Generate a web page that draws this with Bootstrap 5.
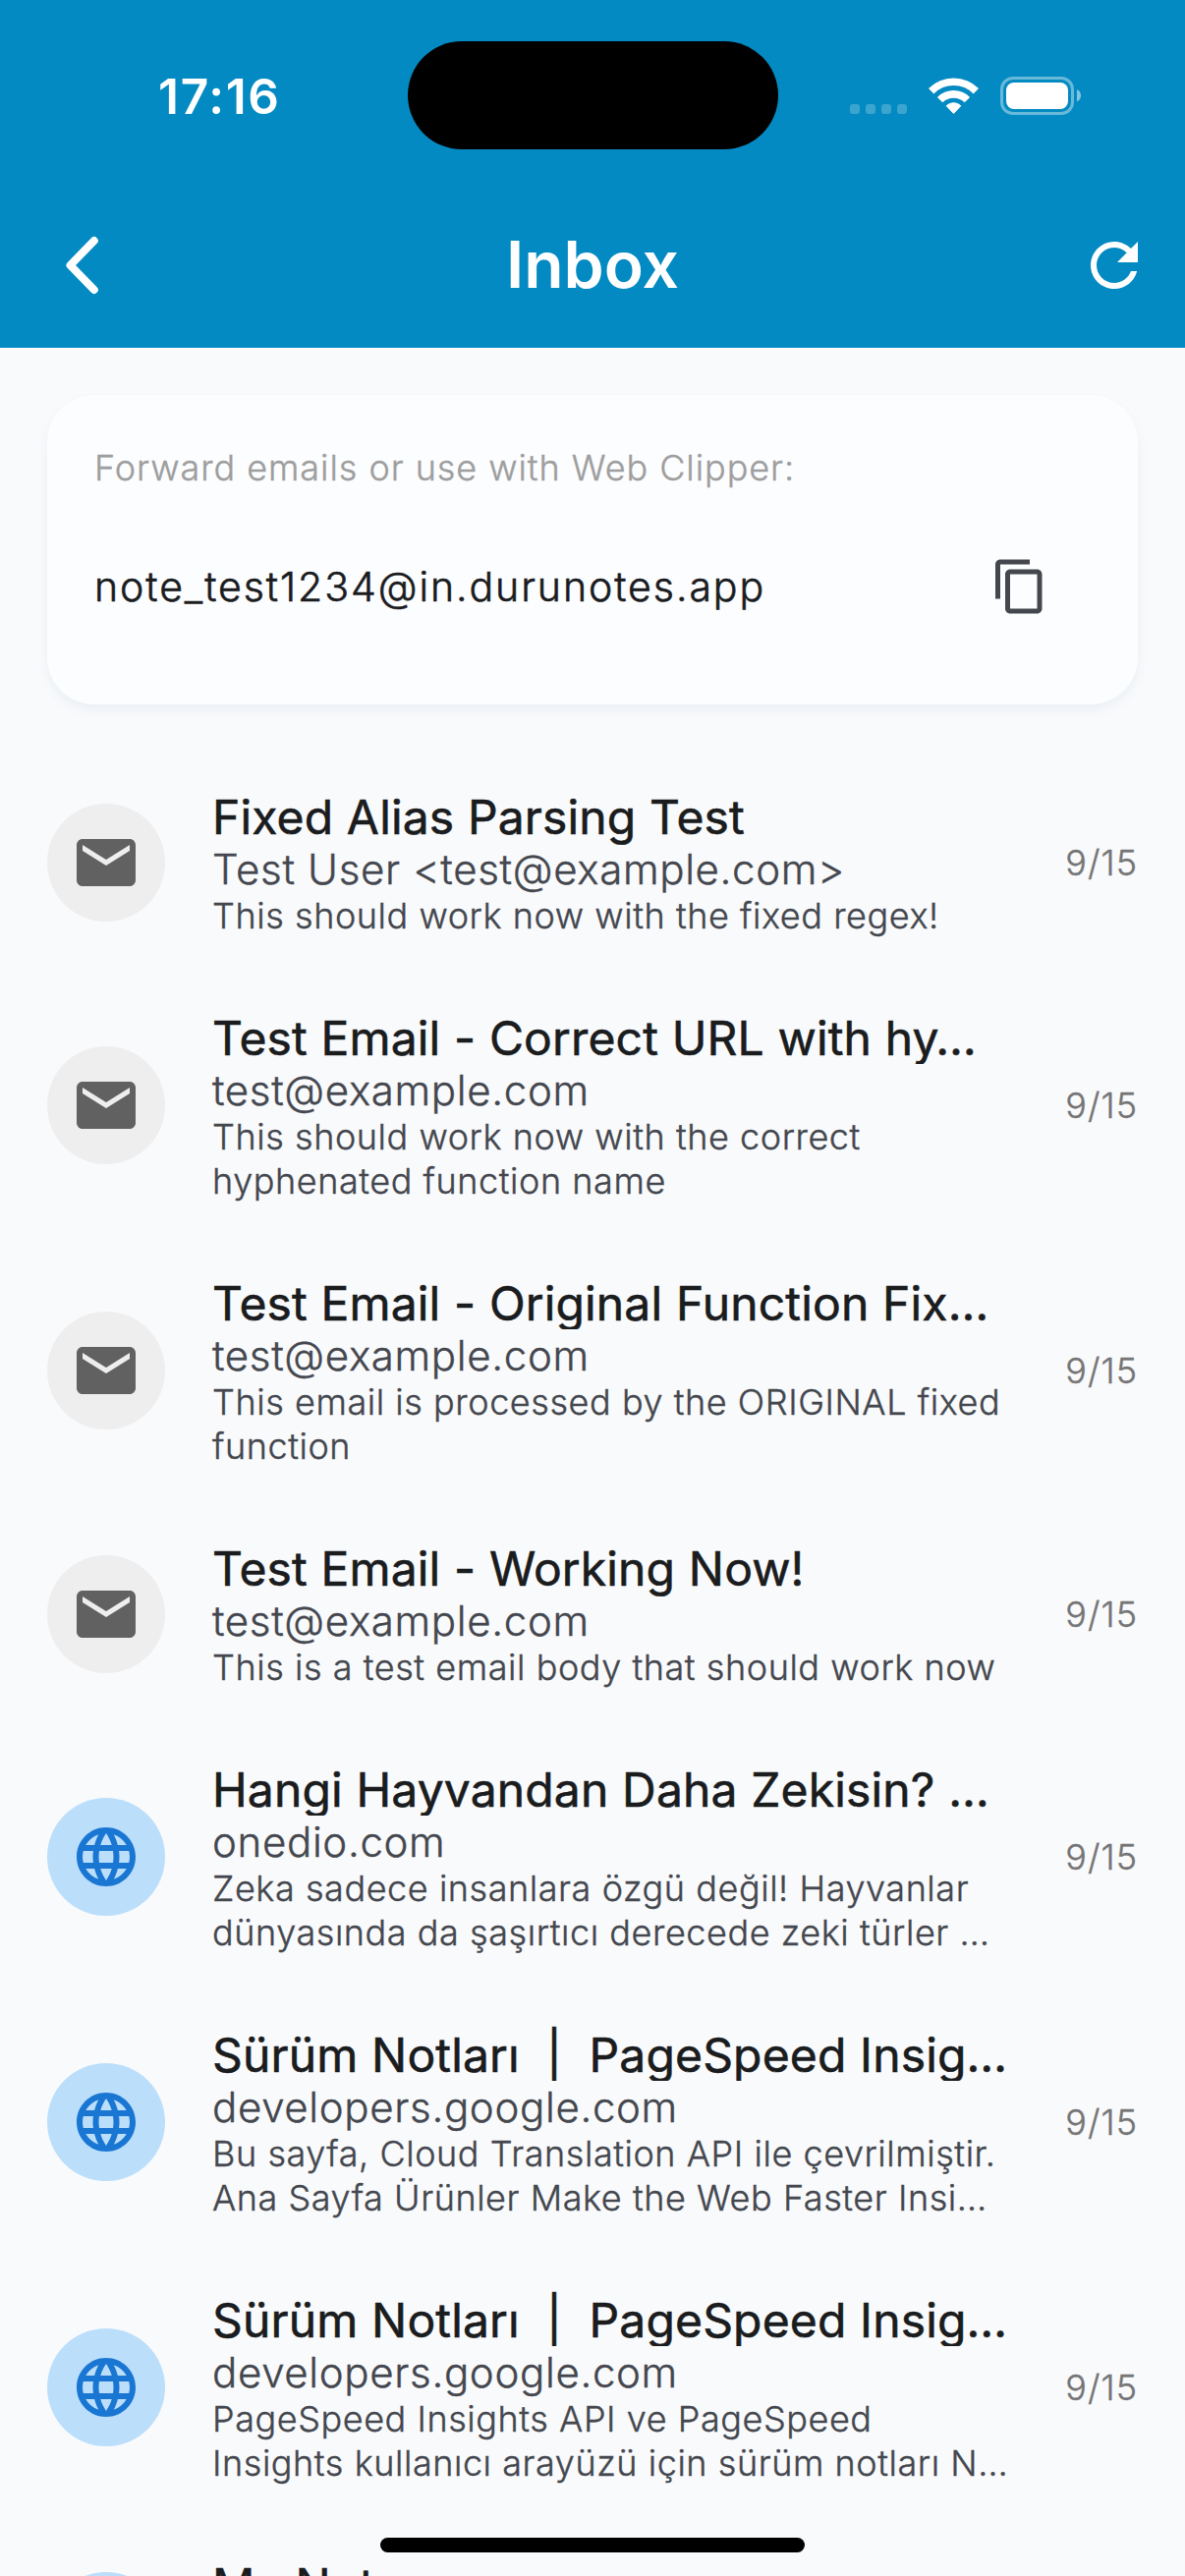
<!DOCTYPE html>
<html lang="tr">
<head>
<meta charset="utf-8">
<meta name="viewport" content="width=device-width, initial-scale=1">
<title>Inbox</title>
<link href="https://cdn.jsdelivr.net/npm/bootstrap@5.3.0/dist/css/bootstrap.min.css" rel="stylesheet">
<style>
  html, body { height: 2622px; overflow: hidden; }
  body { width: 1206px; background: #f9fafc; font-family: Inter, "Liberation Sans", sans-serif; color: #1a1c1e; position: relative; }
  .app-top { height: 354px; background: #048ac2; }
  .status-row { height: 192px; padding: 42px 105px 0 161px; }
  .clock { font-size: 49.5px; line-height: 60px; font-weight: 600; width: 254px; padding-top: 26px; letter-spacing: 1.7px; }
  .island { width: 377px; height: 110px; border-radius: 55px; background: #000; }
  .status-icons { margin-left: 73px; padding-top: 36px; }
  .title-row { height: 156px; padding: 0 36px 0 47px; }
  .app-title { font-size: 66px; font-weight: 600; line-height: 80px; margin: 0 11px 2px 0; }
  .alias-card { margin: 48px 48px 0; height: 315px; border: 0; border-radius: 48px; background: #fcfdff; padding: 48px; box-shadow: 0 6px 12px rgba(0, 80, 120, .06); }
  .alias-hint, .alias-mail, .mail-from, .mail-text, .mail-date { font-weight: 300; -webkit-text-stroke: .4px currentColor; }
  .alias-hint { font-size: 36px; line-height: 52px; color: #9e9e9e; letter-spacing: .95px; }
  .alias-line { height: 144px; margin-top: 23px; }
  .alias-mail { font-size: 41px; line-height: 54px; letter-spacing: 1.94px; -webkit-text-stroke-width: .6px; }
  .copy-btn { width: 144px; height: 144px; }
  .inbox-list { margin-top: 48px; height: 1857px; overflow: hidden; }
  .mail-row { height: 270px; padding: 0 48px; }
  .mail-row.one-line { height: 225px; }
  .avatar { width: 120px; height: 120px; background: #eee; color: #616161; }
  .avatar.web { background: #bbdefb; color: #1976d2; }
  .mail-body { align-self: flex-start; padding-top: 43px; margin-left: 48px; white-space: nowrap; }
  .mail-title { font-size: 48px; line-height: 48px; font-weight: 400; -webkit-text-stroke: .6px currentColor; letter-spacing: .15px; padding-bottom: 3px; }
  .mail-title.cut { clip-path: inset(-20px -60px 1px -20px); }
  .mail-from { font-size: 42px; line-height: 51px; color: #44474e; letter-spacing: .66px; }
  .mail-text { font-size: 36px; line-height: 45px; color: #44474e; letter-spacing: .56px; }
  .mail-date { font-size: 36px; line-height: 45px; color: #757575; letter-spacing: 1px; padding-top: 1px; }
  .home-bar { position: absolute; left: 387px; top: 2583px; width: 432px; height: 15px; border-radius: 8px; background: #000; }
</style>
</head>
<body>
<svg class="d-none" xmlns="http://www.w3.org/2000/svg">
  <symbol id="i-mail" viewBox="0 0 24 24"><path fill="currentColor" d="M20 4H4c-1.1 0-1.99.9-1.99 2L2 18c0 1.1.9 2 2 2h16c1.1 0 2-.9 2-2V6c0-1.1-.9-2-2-2zm0 4l-8 5-8-5V6l8 5 8-5v2z"/></symbol>
  <symbol id="i-web" viewBox="0 0 24 24"><path fill="currentColor" d="M11.99 2C6.47 2 2 6.48 2 12s4.47 10 9.99 10C17.52 22 22 17.52 22 12S17.52 2 11.99 2zm6.93 6h-2.95c-.32-1.25-.78-2.45-1.38-3.56 1.84.63 3.37 1.91 4.33 3.56zM12 4.04c.83 1.2 1.48 2.53 1.91 3.96h-3.82c.43-1.43 1.08-2.76 1.91-3.96zM4.26 14C4.1 13.36 4 12.69 4 12s.1-1.36.26-2h3.38c-.08.66-.14 1.32-.14 2s.06 1.34.14 2H4.26zm.82 2h2.95c.32 1.25.78 2.45 1.38 3.56-1.84-.63-3.37-1.9-4.33-3.56zm2.95-8H5.08c.96-1.66 2.49-2.93 4.33-3.56C8.81 5.55 8.35 6.75 8.03 8zM12 19.96c-.83-1.2-1.48-2.53-1.91-3.96h3.82c-.43 1.43-1.08 2.76-1.91 3.96zM14.34 14H9.66c-.09-.66-.16-1.32-.16-2s.07-1.35.16-2h4.68c.09.65.16 1.32.16 2s-.07 1.34-.16 2zm.25 5.56c.6-1.11 1.06-2.31 1.38-3.56h2.95c-.96 1.65-2.49 2.93-4.33 3.56zM16.36 14c.08-.66.14-1.32.14-2s-.06-1.34-.14-2h3.38c.16.64.26 1.31.26 2s-.1 1.36-.26 2h-3.38z"/></symbol>
</svg>

<header class="app-top text-white">
  <div class="status-row d-flex align-items-start">
    <div class="clock">17:16</div>
    <div class="island"></div>
    <div class="status-icons d-flex">
      <svg width="236" height="40" viewBox="865 78 236 40" fill="#fff">
        <g opacity=".22"><rect x="865" y="106" width="10" height="10" rx="3"/><rect x="881" y="106" width="10" height="10" rx="3"/><rect x="897" y="106" width="10" height="10" rx="3"/><rect x="913" y="106" width="10" height="10" rx="3"/></g>
        <g fill="none" stroke="#fff" stroke-width="7.600"><path d="M947.700 92.700A32.300 32.300 0 0 1 993.300 92.700"/><path d="M956.600 101.600A19.700 19.700 0 0 1 984.400 101.600"/></g>
        <path d="M963.200 107.700C967.500 103.800 973.500 103.800 977.800 107.700L970.500 115.500Z" stroke="#fff" stroke-width="1" stroke-linejoin="round"/>
        <rect x="1019.500" y="79.500" width="72" height="36" rx="11.500" fill="none" stroke="#fff" stroke-opacity=".4" stroke-width="3"/>
        <rect x="1024" y="84" width="63" height="27" rx="8"/>
        <path d="M1096 91Q1100 93 1100 97.300Q1100 101.500 1096 103.500Z" opacity=".5"/>
      </svg>
    </div>
  </div>
  <nav class="title-row d-flex align-items-center justify-content-between">
    <svg width="72" height="72" viewBox="0 0 72 72" fill="none" stroke="#fff" stroke-width="8" stroke-linecap="round" stroke-linejoin="round"><path d="M48.800 11L24.500 36L48.800 61"/></svg>
    <h1 class="app-title">Inbox</h1>
    <svg width="72" height="72" viewBox="0 0 24 24" fill="#fff"><path d="M17.650 6.350C16.200 4.900 14.210 4 12 4c-4.420 0-7.990 3.580-7.990 8s3.570 8 7.990 8c3.730 0 6.840-2.550 7.730-6h-2.080c-.82 2.330-3.040 4-5.650 4-3.310 0-6-2.690-6-6s2.690-6 6-6c1.660 0 3.140.69 4.220 1.780L13 11h7V4l-2.350 2.350z"/></svg>
  </nav>
</header>

<main>
  <section class="card alias-card">
    <div class="alias-hint">Forward emails or use with Web Clipper:</div>
    <div class="alias-line d-flex align-items-center justify-content-between">
      <div class="alias-mail">note_test1234@in.durunotes.app</div>
      <div class="copy-btn d-flex align-items-center justify-content-center">
        <svg width="60" height="60" viewBox="0 0 24 24" fill="#44474e"><path d="M16 1H4c-1.100 0-2 .9-2 2v14h2V3h12V1zm3 4H8c-1.100 0-2 .9-2 2v14c0 1.100.9 2 2 2h11c1.100 0 2-.9 2-2V7c0-1.100-.9-2-2-2zm0 16H8V7h11v14z"/></svg>
      </div>
    </div>
  </section>

  <section class="inbox-list">
    <article class="mail-row one-line d-flex align-items-center">
      <div class="avatar rounded-circle d-flex align-items-center justify-content-center flex-shrink-0"><svg width="72" height="72"><use href="#i-mail"/></svg></div>
      <div class="mail-body flex-grow-1"><div class="mail-title">Fixed Alias Parsing Test</div><div class="mail-from">Test User &lt;test@example.com&gt;</div><div class="mail-text">This should work now with the fixed regex!</div></div>
      <div class="mail-date">9/15</div>
    </article>
    <article class="mail-row d-flex align-items-center">
      <div class="avatar rounded-circle d-flex align-items-center justify-content-center flex-shrink-0"><svg width="72" height="72"><use href="#i-mail"/></svg></div>
      <div class="mail-body flex-grow-1"><div class="mail-title cut">Test Email - Correct URL with hy…</div><div class="mail-from">test@example.com</div><div class="mail-text">This should work now with the correct<br>hyphenated function name</div></div>
      <div class="mail-date">9/15</div>
    </article>
    <article class="mail-row d-flex align-items-center">
      <div class="avatar rounded-circle d-flex align-items-center justify-content-center flex-shrink-0"><svg width="72" height="72"><use href="#i-mail"/></svg></div>
      <div class="mail-body flex-grow-1"><div class="mail-title cut">Test Email - Original Function Fix…</div><div class="mail-from">test@example.com</div><div class="mail-text">This email is processed by the ORIGINAL fixed<br>function</div></div>
      <div class="mail-date">9/15</div>
    </article>
    <article class="mail-row one-line d-flex align-items-center">
      <div class="avatar rounded-circle d-flex align-items-center justify-content-center flex-shrink-0"><svg width="72" height="72"><use href="#i-mail"/></svg></div>
      <div class="mail-body flex-grow-1"><div class="mail-title">Test Email - Working Now!</div><div class="mail-from">test@example.com</div><div class="mail-text">This is a test email body that should work now</div></div>
      <div class="mail-date">9/15</div>
    </article>
    <article class="mail-row d-flex align-items-center">
      <div class="avatar web rounded-circle d-flex align-items-center justify-content-center flex-shrink-0"><svg width="72" height="72"><use href="#i-web"/></svg></div>
      <div class="mail-body flex-grow-1"><div class="mail-title cut">Hangi Hayvandan Daha Zekisin? …</div><div class="mail-from">onedio.com</div><div class="mail-text">Zeka sadece insanlara özgü değil! Hayvanlar<br>dünyasında da şaşırtıcı derecede zeki türler …</div></div>
      <div class="mail-date">9/15</div>
    </article>
    <article class="mail-row d-flex align-items-center">
      <div class="avatar web rounded-circle d-flex align-items-center justify-content-center flex-shrink-0"><svg width="72" height="72"><use href="#i-web"/></svg></div>
      <div class="mail-body flex-grow-1"><div class="mail-title cut">Sürüm Notları &nbsp;|&nbsp; PageSpeed Insig…</div><div class="mail-from">developers.google.com</div><div class="mail-text">Bu sayfa, Cloud Translation API ile çevrilmiştir.<br>Ana Sayfa Ürünler Make the Web Faster Insi…</div></div>
      <div class="mail-date">9/15</div>
    </article>
    <article class="mail-row d-flex align-items-center">
      <div class="avatar web rounded-circle d-flex align-items-center justify-content-center flex-shrink-0"><svg width="72" height="72"><use href="#i-web"/></svg></div>
      <div class="mail-body flex-grow-1"><div class="mail-title cut">Sürüm Notları &nbsp;|&nbsp; PageSpeed Insig…</div><div class="mail-from">developers.google.com</div><div class="mail-text">PageSpeed Insights API ve PageSpeed<br>Insights kullanıcı arayüzü için sürüm notları N…</div></div>
      <div class="mail-date">9/15</div>
    </article>
    <article class="mail-row one-line d-flex align-items-center">
      <div class="avatar web rounded-circle d-flex align-items-center justify-content-center flex-shrink-0"></div>
      <div class="mail-body flex-grow-1"><div class="mail-title">My Note</div></div>
    </article>
  </section>
</main>
<div class="home-bar"></div>
<script src="https://cdn.jsdelivr.net/npm/bootstrap@5.3.0/dist/js/bootstrap.bundle.min.js"></script>
</body>
</html>
